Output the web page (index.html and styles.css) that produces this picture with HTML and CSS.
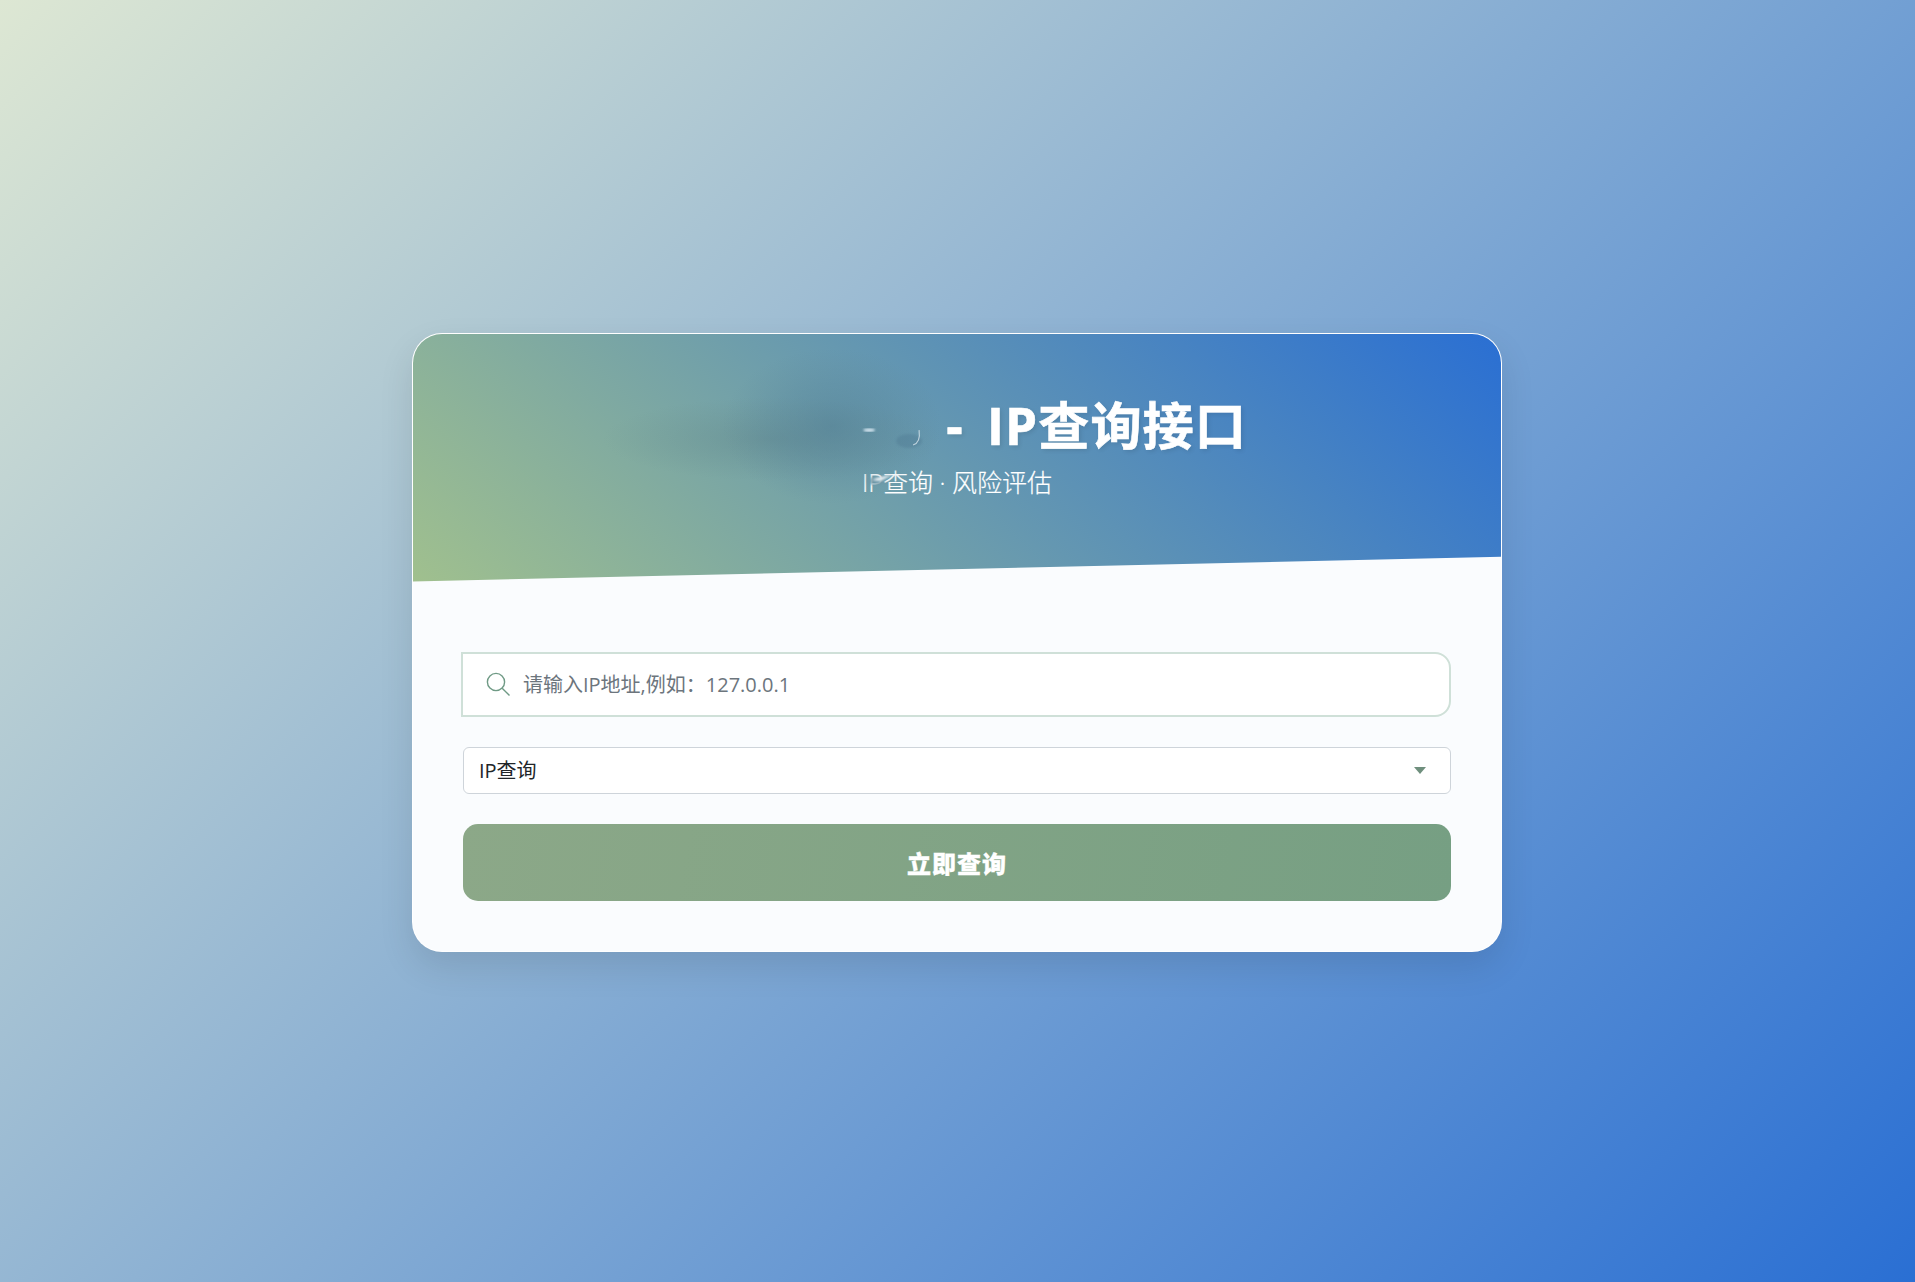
FILE: index.html
```html
<!DOCTYPE html>
<html lang="zh-CN">
<head>
<meta charset="utf-8">
<title>IP查询接口</title>
<link rel="stylesheet" href="styles.css">
</head>
<body>
<main class="card">
  <header class="card-header">
    <h1 class="title"><span class="title-hidden"></span><span> - IP查询接口</span></h1>
    <p class="subtitle">IP查询 · 风险评估</p>
    <svg class="smudge" viewBox="0 0 1090 248" aria-hidden="true">
      <defs>
        <radialGradient id="dark">
          <stop offset="0" stop-color="#4f7c94" stop-opacity=".5"/>
          <stop offset=".55" stop-color="#527f96" stop-opacity=".24"/>
          <stop offset="1" stop-color="#5a8496" stop-opacity="0"/>
        </radialGradient>
        <radialGradient id="olive">
          <stop offset="0" stop-color="#5f8488" stop-opacity=".42"/>
          <stop offset="1" stop-color="#64898a" stop-opacity="0"/>
        </radialGradient>
        <filter id="soft"><feGaussianBlur stdDeviation=".8"/></filter>
      </defs>
      <ellipse cx="360" cy="105" rx="170" ry="42" fill="url(#olive)"/>
      <ellipse cx="420" cy="92" rx="110" ry="78" fill="url(#dark)"/>
      <ellipse cx="457" cy="96" rx="6" ry="1.6" fill="#dcebf5" filter="url(#soft)"/>
      <ellipse cx="497" cy="107" rx="13" ry="7" fill="#4c7690" opacity=".35" filter="url(#soft)"/>
      <path d="M507 96c1 7 0 13-6 15" fill="none" stroke="#d5e2ea" stroke-width="1.2" opacity=".8"/>
      <ellipse cx="464" cy="147" rx="9" ry="4" fill="#6f98a8" opacity=".75" filter="url(#soft)"/>
      <path d="M460 146c6-3 12-4 21-5-6 2-9 5-14 6z" fill="#e6eef2" filter="url(#soft)"/>
    </svg>
  </header>
  <section class="card-body">
    <label class="search">
      <svg class="search-icon" viewBox="0 0 26 26" aria-hidden="true">
        <circle cx="11" cy="11" r="8.6"/>
        <path d="M17.2 17.2 24.5 24.5"/>
      </svg>
      <input class="search-input" type="text" placeholder="请输入IP地址,例如：127.0.0.1">
    </label>
    <div class="select-wrap">
      <select class="select">
        <option>IP查询</option>
      </select>
      <svg class="select-arrow" viewBox="0 0 12 7" aria-hidden="true"><path d="M0 0h12L6 7z"/></svg>
    </div>
    <button class="submit" type="button">立即查询</button>
  </section>
</main>
</body>
</html>
```

FILE: styles.css
```css
* { box-sizing: border-box; }
html, body { height: 100%; }
body {
  margin: 0;
  padding: 2px 1px 0 0;
  display: flex;
  align-items: center;
  justify-content: center;
  background: linear-gradient(135deg, #dde7d3 0%, #2a6fd3 100%);
  font-family: "Open Sans", "Noto Sans CJK SC", sans-serif;
}
.card {
  width: 1090px;
  background: #fafcfe;
  border: 1px solid rgba(255, 255, 255, .85);
  border-radius: 30px;
  overflow: hidden;
  box-shadow: 0 15px 35px rgba(0, 0, 0, .1);
}
.card-header {
  position: relative;
  height: 248px;
  padding-top: 61px;
  text-align: center;
  color: #fff;
  background: linear-gradient(45deg, #a0c08e 0%, #2a6fd3 100%);
  clip-path: polygon(0 0, 100% 0, 100% 90%, 0 100%);
}
.title {
  margin: 0;
  display: flex;
  justify-content: center;
  font-size: 51.2px;
  line-height: 1.2;
  font-weight: 700;
  letter-spacing: 1px;
  word-spacing: 9px;
  white-space: pre;
  -webkit-text-stroke: .6px #fff;
  text-shadow: 2px 2px 4px rgba(0, 0, 0, .1);
}
.title-hidden { width: 256px; }
.subtitle {
  margin: 10px 0 0;
  font-size: 25px;
  line-height: 1.3;
  font-weight: 300;
  -webkit-text-stroke: .2px #fff;
}
.smudge {
  position: absolute;
  inset: 0;
  width: 100%;
  height: 100%;
  pointer-events: none;
}
.card-body {
  padding: 70px 50px 50px;
  display: flex;
  flex-direction: column;
}
.search {
  display: flex;
  align-items: center;
  height: 65px;
  margin: 0 0 30px -2px;
  padding-left: 22px;
  background: #fff;
  border: 2px solid #cfe0d8;
  border-radius: 0 16px 16px 0;
}
.search-icon {
  flex: none;
  width: 26px;
  height: 26px;
  fill: none;
  stroke: #6f9a85;
  stroke-width: 1.4;
}
.search-input {
  flex: 1;
  min-width: 0;
  margin-left: 10px;
  border: 0;
  outline: 0;
  background: transparent;
  font: inherit;
  font-size: 20px;
  color: #212529;
}
.search-input::placeholder { color: #6c757d; opacity: 1; }
.select-wrap { position: relative; margin-bottom: 30px; }
.select {
  display: block;
  width: 100%;
  height: 47px;
  padding: 0 15px;
  appearance: none;
  background: #fff;
  border: 1px solid #ced4da;
  border-radius: 6px;
  font: inherit;
  font-size: 20px;
  color: #212529;
}
.select-arrow {
  position: absolute;
  top: 20px;
  right: 25px;
  width: 12px;
  height: 7px;
  fill: #6f8f7d;
  pointer-events: none;
}
.submit {
  height: 77px;
  border: 0;
  border-radius: 15px;
  background: linear-gradient(100deg, #8ca888 0%, #769f83 100%);
  color: #fff;
  font: inherit;
  font-size: 24px;
  font-weight: 900;
  letter-spacing: 1px;
  -webkit-text-stroke: .3px #fff;
}
```
